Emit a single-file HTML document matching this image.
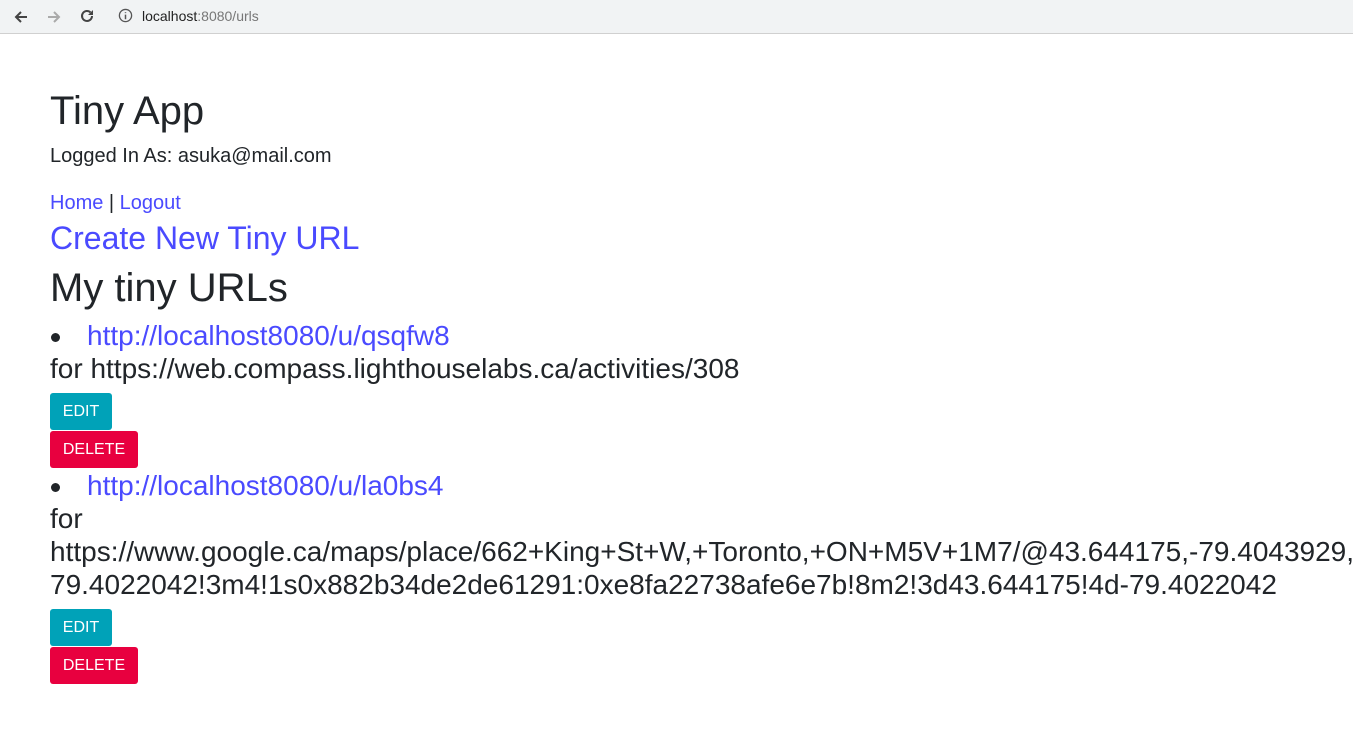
<!DOCTYPE html>
<html><head><meta charset="utf-8"><style>
*{margin:0;padding:0;box-sizing:border-box}
body{width:1353px;height:740px;overflow:hidden;background:#fff;font-family:"Liberation Sans",sans-serif;color:#212529;position:relative}
.bar{position:absolute;left:0;top:0;width:1353px;height:34px;background:#f1f3f4;border-bottom:1px solid #d0d0d0}
.t{position:absolute;left:50px;white-space:nowrap;line-height:1}
a{color:#4a4aff;text-decoration:none}
.btn{position:absolute;left:50px;height:37px;border-radius:3px;color:#fff;font-size:16px;line-height:37px;text-align:center}
.edit{background:#00a2b8;width:62px}
.del{background:#e8003f;width:88px}
.dot{position:absolute;left:51px;width:9px;height:9px;border-radius:50%;background:#212529}
</style></head><body>
<div class="bar">
<svg style="position:absolute;left:12px;top:8px" width="18" height="18" viewBox="0 0 18 18"><path d="M15 9H4M9 4L4 9l5 5" stroke="#444" stroke-width="2" fill="none"/></svg>
<svg style="position:absolute;left:45px;top:8px" width="18" height="18" viewBox="0 0 18 18"><path d="M3 9h11M9 4l5 5-5 5" stroke="#aaa" stroke-width="2" fill="none"/></svg>
<svg style="position:absolute;left:78px;top:7px" width="18" height="18" viewBox="0 0 18 18"><path d="M14 9a5 5 0 1 1-1.5-3.6" stroke="#444" stroke-width="2" fill="none"/><path d="M15 3v5h-5z" fill="#444"/></svg>
<svg style="position:absolute;left:118px;top:8px" width="15" height="15" viewBox="0 0 16 16"><circle cx="8" cy="8" r="6.5" stroke="#555" stroke-width="1.4" fill="none"/><path d="M8 7v5M8 4.5v1" stroke="#555" stroke-width="1.6"/></svg>
<div style="position:absolute;left:142px;top:8px;font-size:14px;color:#222">localhost<span style="color:#777">:8080/urls</span></div>
</div>
<div class="t" style="top:91px;font-size:40px">Tiny App</div>
<div class="t" style="top:146px;font-size:20px">Logged In As: asuka@mail.com</div>
<div class="t" style="top:193px;font-size:20px"><a>Home</a> | <a>Logout</a></div>
<div class="t" style="top:222px;font-size:32px"><a>Create New Tiny URL</a></div>
<div class="t" style="top:268px;font-size:40px">My tiny URLs</div>
<div class="dot" style="top:333px"></div>
<div class="t" style="left:87px;top:322px;font-size:28px"><a>http://localhost8080/u/qsqfw8</a></div>
<div class="t" style="top:355px;font-size:28px">for https://web.compass.lighthouselabs.ca/activities/308</div>
<div class="btn edit" style="top:393px">EDIT</div>
<div class="btn del" style="top:431px">DELETE</div>
<div class="dot" style="top:483px"></div>
<div class="t" style="left:87px;top:472px;font-size:28px"><a>http://localhost8080/u/la0bs4</a></div>
<div class="t" style="top:505px;font-size:28px">for</div>
<div class="t" style="top:538px;font-size:28px">https://www.google.ca/maps/place/662+King+St+W,+Toronto,+ON+M5V+1M7/@43.644175,-79.4043929,</div>
<div class="t" style="top:571px;font-size:28px">79.4022042!3m4!1s0x882b34de2de61291:0xe8fa22738afe6e7b!8m2!3d43.644175!4d-79.4022042</div>
<div class="btn edit" style="top:609px">EDIT</div>
<div class="btn del" style="top:647px">DELETE</div>
</body></html>
